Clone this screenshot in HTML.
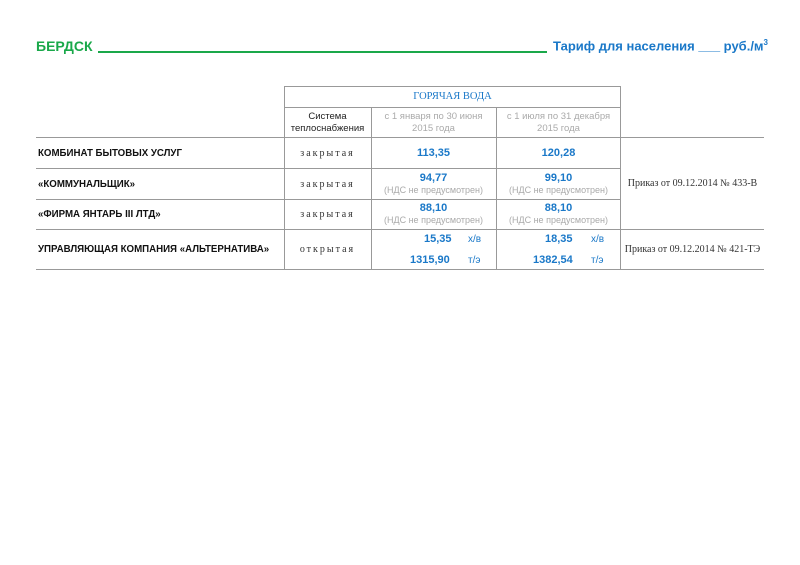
<!DOCTYPE html><html><head><meta charset="utf-8"><style>
body{margin:0;width:800px;height:565px;background:#fff;position:relative;overflow:hidden;font-family:"Liberation Sans",sans-serif}
.a{position:absolute}
.h{background:#999}
.t{position:absolute;text-align:center;white-space:nowrap}
.b{color:#1a78c8;font-weight:bold;font-size:11px}
.g{color:#aaa;font-size:9px}
.s{font-family:"Liberation Serif",serif;font-size:10px;letter-spacing:2px;color:#333}
.n{font-weight:bold;font-size:9.7px;color:#111;left:38px;position:absolute}
.p{font-family:"Liberation Serif",serif;font-size:10px;color:#333}
</style></head><body>
<div class="a" style="left:36px;top:38px;font-weight:bold;font-size:14px;color:#1aa84a">БЕРДСК</div>
<div class="a" style="left:98px;top:51px;width:449px;height:2px;background:#1aa84a"></div>
<div class="a" style="left:553px;top:38px;font-weight:bold;font-size:13px;color:#1a78c8">Тариф для населения ___ руб./м<sup style="font-size:8px">3</sup></div>

<div class="a h" style="left:284px;top:86px;width:337px;height:1px"></div>
<div class="a h" style="left:284px;top:107px;width:337px;height:1px"></div>
<div class="a h" style="left:36px;top:137px;width:728px;height:1px"></div>
<div class="a h" style="left:36px;top:168px;width:585px;height:1px"></div>
<div class="a h" style="left:36px;top:199px;width:585px;height:1px"></div>
<div class="a h" style="left:36px;top:229px;width:728px;height:1px"></div>
<div class="a h" style="left:36px;top:269px;width:728px;height:1px"></div>
<div class="a h" style="left:284px;top:86px;width:1px;height:184px"></div>
<div class="a h" style="left:371px;top:107px;width:1px;height:163px"></div>
<div class="a h" style="left:496px;top:107px;width:1px;height:163px"></div>
<div class="a h" style="left:620px;top:86px;width:1px;height:184px"></div>

<div class="t" style="left:284px;width:337px;top:91px;font-family:'Liberation Serif',serif;font-size:10.5px;color:#1a78c8">ГОРЯЧАЯ ВОДА</div>
<div class="t" style="left:284px;width:87px;top:111px;font-size:9.5px;line-height:12px;color:#222">Система<br>теплоснабжения</div>
<div class="t g" style="left:371px;width:125px;top:111px;font-size:9.5px;line-height:12px">с 1 января по 30 июня<br>2015 года</div>
<div class="t g" style="left:496px;width:125px;top:111px;font-size:9.5px;line-height:12px">с 1 июля по 31 декабря<br>2015 года</div>

<div class="n" style="top:148px">КОМБИНАТ БЫТОВЫХ УСЛУГ</div>
<div class="n" style="top:179px">«КОММУНАЛЬЩИК»</div>
<div class="n" style="top:209px">«ФИРМА ЯНТАРЬ III ЛТД»</div>
<div class="n" style="top:244px">УПРАВЛЯЮЩАЯ КОМПАНИЯ «АЛЬТЕРНАТИВА»</div>

<div class="t s" style="left:284px;width:87px;top:148px">закрытая</div>
<div class="t s" style="left:284px;width:87px;top:179px">закрытая</div>
<div class="t s" style="left:284px;width:87px;top:209px">закрытая</div>
<div class="t s" style="left:284px;width:87px;top:244px">открытая</div>

<div class="t b" style="left:371px;width:125px;top:147px">113,35</div>
<div class="t b" style="left:496px;width:125px;top:147px">120,28</div>
<div class="t b" style="left:371px;width:125px;top:172px">94,77</div>
<div class="t g" style="left:371px;width:125px;top:185px">(НДС не предусмотрен)</div>
<div class="t b" style="left:496px;width:125px;top:172px">99,10</div>
<div class="t g" style="left:496px;width:125px;top:185px">(НДС не предусмотрен)</div>
<div class="t b" style="left:371px;width:125px;top:202px">88,10</div>
<div class="t g" style="left:371px;width:125px;top:215px">(НДС не предусмотрен)</div>
<div class="t b" style="left:496px;width:125px;top:202px">88,10</div>
<div class="t g" style="left:496px;width:125px;top:215px">(НДС не предусмотрен)</div>

<div class="a b" style="left:424px;top:233px">15,35</div>
<div class="a b" style="left:468px;top:234px;font-weight:normal;font-size:10px">х/в</div>
<div class="a b" style="left:410px;top:254px">1315,90</div>
<div class="a b" style="left:468px;top:255px;font-weight:normal;font-size:10px">т/э</div>
<div class="a b" style="left:545px;top:233px">18,35</div>
<div class="a b" style="left:591px;top:234px;font-weight:normal;font-size:10px">х/в</div>
<div class="a b" style="left:533px;top:254px">1382,54</div>
<div class="a b" style="left:591px;top:255px;font-weight:normal;font-size:10px">т/э</div>

<div class="t p" style="left:621px;width:143px;top:178px">Приказ от 09.12.2014 № 433-В</div>
<div class="t p" style="left:621px;width:143px;top:244px">Приказ от 09.12.2014 № 421-ТЭ</div>
</body></html>
